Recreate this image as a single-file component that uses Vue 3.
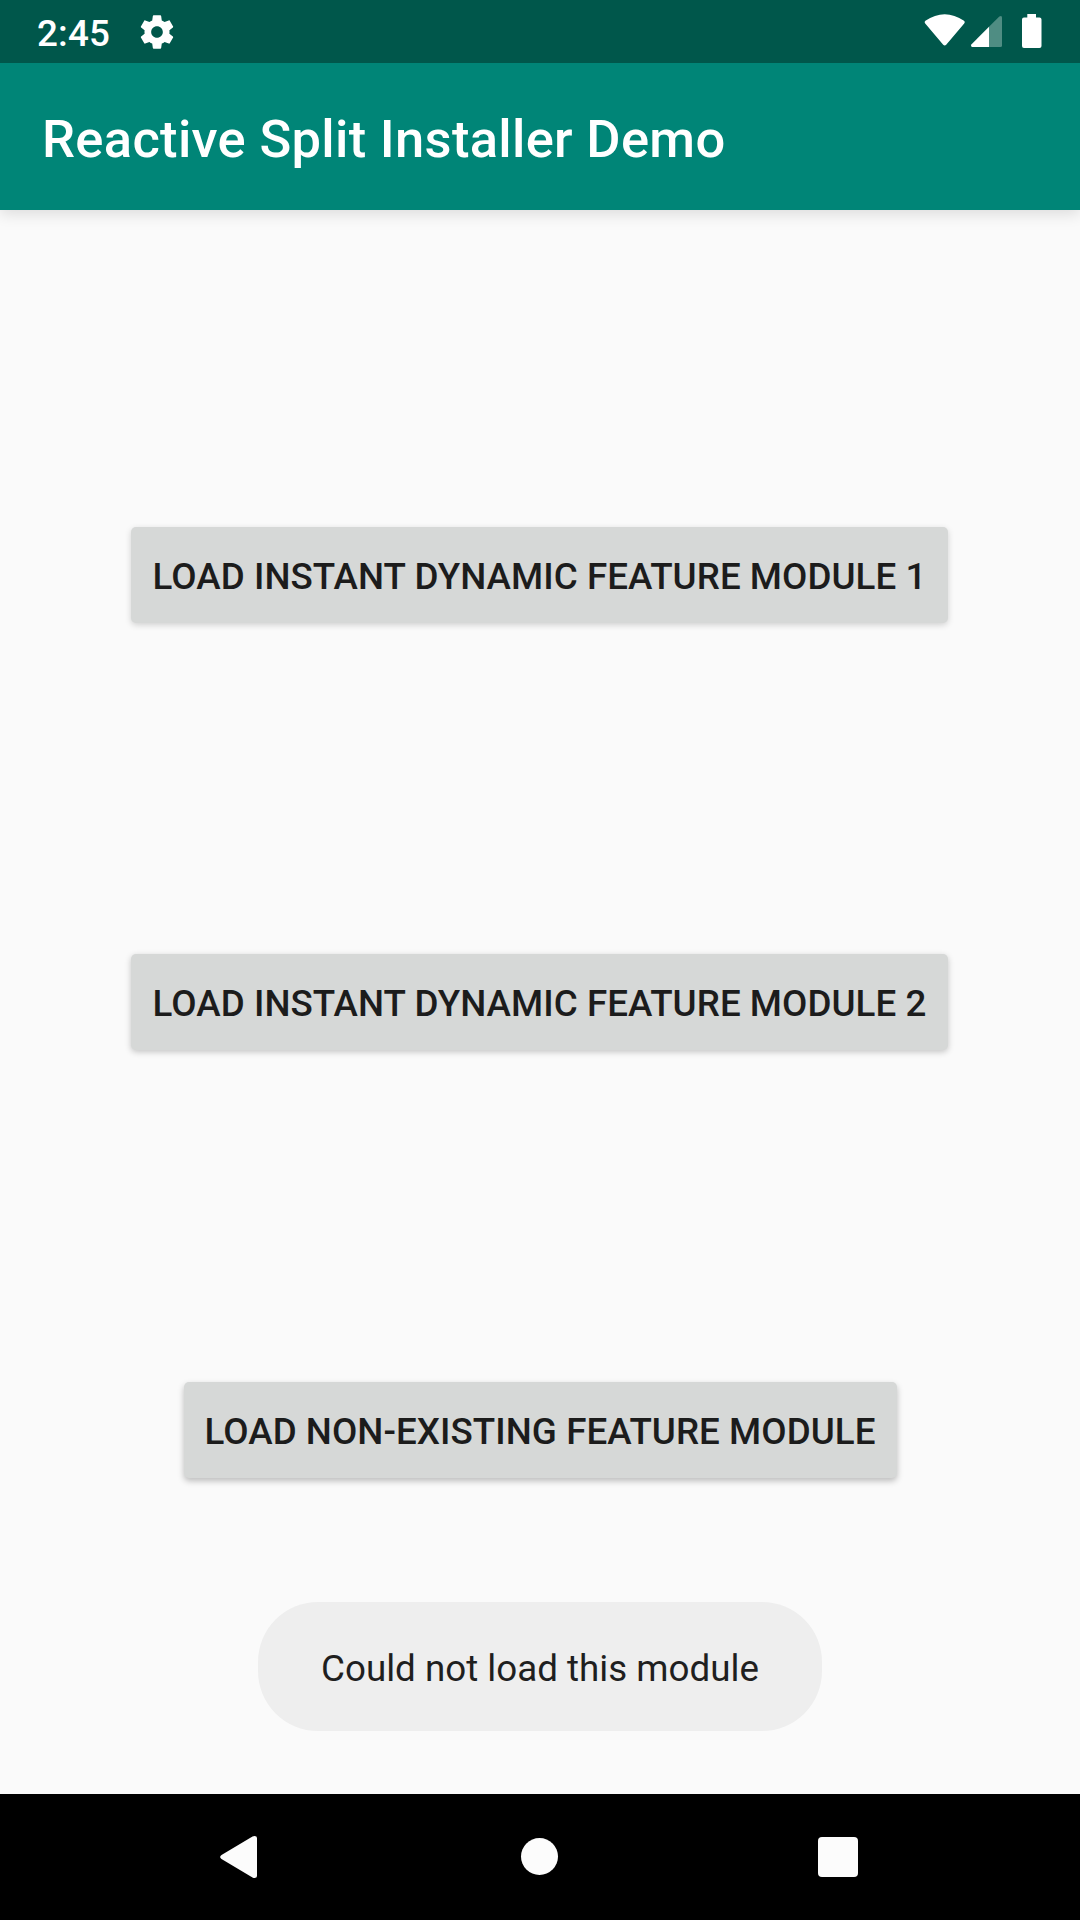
<script setup>
const actions = [
  { label: 'LOAD INSTANT DYNAMIC FEATURE MODULE 1', size: 'wide', shade: 'soft' },
  { label: 'LOAD INSTANT DYNAMIC FEATURE MODULE 2', size: 'wide', shade: 'mid' },
  { label: 'LOAD NON-EXISTING FEATURE MODULE', size: 'narrow', shade: 'deep' },
]
</script>

<template>
  <div class="screen">
    <header class="status">
      <span class="time">2:45</span>
      <svg class="gear" width="40" height="40" viewBox="0 0 24 24" fill="#fff">
        <path d="M19.43 12.98c.04-.32.07-.64.07-.98s-.03-.66-.07-.98l2.11-1.65c.19-.15.24-.42.12-.64l-2-3.46c-.12-.22-.39-.3-.61-.22l-2.49 1c-.52-.4-1.08-.73-1.69-.98l-.38-2.65C14.46 2.18 14.25 2 14 2h-4c-.25 0-.46.18-.49.42l-.38 2.65c-.61.25-1.17.59-1.69.98l-2.49-1c-.23-.09-.49 0-.61.22l-2 3.46c-.13.22-.07.49.12.64l2.11 1.65c-.04.32-.07.65-.07.98s.03.66.07.98l-2.11 1.65c-.19.15-.24.42-.12.64l2 3.46c.12.22.39.3.61.22l2.49-1c.52.4 1.08.73 1.69.98l.38 2.65c.03.24.24.42.49.42h4c.25 0 .46-.18.49-.42l.38-2.65c.61-.25 1.17-.59 1.69-.98l2.49 1c.23.09.49 0 .61-.22l2-3.46c.12-.22.07-.49-.12-.64l-2.11-1.65zM12 15.5c-1.93 0-3.5-1.57-3.5-3.5s1.57-3.5 3.5-3.5 3.500 1.570 3.500 3.500-1.570 3.500-3.500 3.500z" />
      </svg>
      <svg class="indicators" width="120" height="63" viewBox="0 0 120 63">
        <path fill="#fff" d="M5.200 23.400Q3.800 22 5.400 20.700C18 12 31.400 12 44 20.700Q45.600 22 44.200 23.400L26.200 44.700Q24.700 46.300 23.200 44.700Z" />
        <path fill="#4f8d83" d="M69 26.800L79.300 16.500Q82 15 82 17.500V45.500Q82 47 80.500 47H69Z" />
        <path fill="#fff" d="M69 26.800V47H52Q50.200 46.400 51.300 44.500Z" />
        <path fill="#fff" d="M107.300 14H116V17.500H119.500Q121.500 17.500 121.500 19.500V46Q121.500 48 119.500 48H104Q102 48 102 46V19.500Q102 17.500 104 17.500H107.300Z" />
      </svg>
    </header>
    <div class="appbar">
      <h1>Reactive Split Installer Demo</h1>
    </div>
    <main class="content">
      <button v-for="a in actions" :key="a.label" class="action" :class="[a.size, a.shade]">{{ a.label }}</button>
      <div class="toast">Could not load this module</div>
    </main>
    <nav class="nav">
      <svg class="back" width="37" height="42" viewBox="0 0 37 42" fill="#fcfcfc">
        <path d="M37 2V40Q37 42 34.500 42Q33.500 42 32.500 41.400L1.500 23Q-1.200 21 1.500 19L32.500 .600Q33.500 0 34.500 0Q37 0 37 2Z" />
      </svg>
      <span class="home"></span>
      <span class="recent"></span>
    </nav>
  </div>
</template>

<style>
body {
  background: #fafafa;
}
</style>

<style scoped>
.screen {
  width: 1080px;
  height: 1920px;
  display: flex;
  flex-direction: column;
  background: #fafafa;
  font-family: Roboto, sans-serif;
  overflow: hidden;
}
.status {
  height: 63px;
  flex: none;
  position: relative;
  z-index: 1;
  display: flex;
  align-items: center;
  background: #00574b;
}
.time {
  margin-left: 37px;
  width: 100px;
  padding-top: 5px;
  color: #fff;
  font-size: 36.75px;
  line-height: 44px;
  font-weight: 500;
  letter-spacing: 0.2px;
}
.indicators {
  margin-left: auto;
  margin-right: 40px;
  overflow: visible;
}
.appbar {
  height: 147px;
  flex: none;
  box-sizing: border-box;
  display: flex;
  align-items: center;
  padding-left: 42px;
  padding-top: 5px;
  background: #008577;
  box-shadow: 0 4px 14px rgba(0, 0, 0, 0.12);
}
h1 {
  margin: 0;
  color: #fff;
  font-size: 52.5px;
  line-height: 62px;
  font-weight: 500;
  letter-spacing: 0.31px;
}
.content {
  flex: 1;
  display: flex;
  flex-direction: column;
  align-items: center;
  padding-top: 317px;
}
.action {
  height: 96px;
  flex: none;
  padding: 2px 0 0;
  margin: 0 0 332px;
  border: 0;
  border-radius: 5px;
  background: #d6d8d7;
  color: #1c1c1c;
  font-family: inherit;
  font-size: 36.75px;
  font-weight: 500;
  letter-spacing: 0.05px;
  white-space: nowrap;
}
.wide {
  width: 817px;
  margin-right: 1px;
}
.narrow {
  width: 713px;
  margin-bottom: 124px;
}
.soft {
  margin-bottom: 331px;
  box-shadow: 0 2px 6px rgba(0, 0, 0, 0.17);
}
.mid {
  box-shadow: 0 2px 6px rgba(0, 0, 0, 0.22);
}
.deep {
  box-shadow: 0 3px 6px rgba(0, 0, 0, 0.25);
}
.toast {
  width: 564px;
  height: 129px;
  flex: none;
  box-sizing: border-box;
  padding-top: 4px;
  display: flex;
  align-items: center;
  justify-content: center;
  border-radius: 60px;
  background: #eee;
  color: #1f1f1f;
  font-size: 36.75px;
}
.nav {
  height: 126px;
  flex: none;
  display: flex;
  align-items: center;
  background: #000;
}
.back {
  margin-left: 220px;
}
.home {
  width: 37px;
  height: 37px;
  margin-left: 264px;
  margin-bottom: 1px;
  border-radius: 50%;
  background: #fcfcfc;
}
.recent {
  width: 40px;
  height: 40px;
  margin-left: 260px;
  border-radius: 4px;
  background: #fcfcfc;
}
</style>
